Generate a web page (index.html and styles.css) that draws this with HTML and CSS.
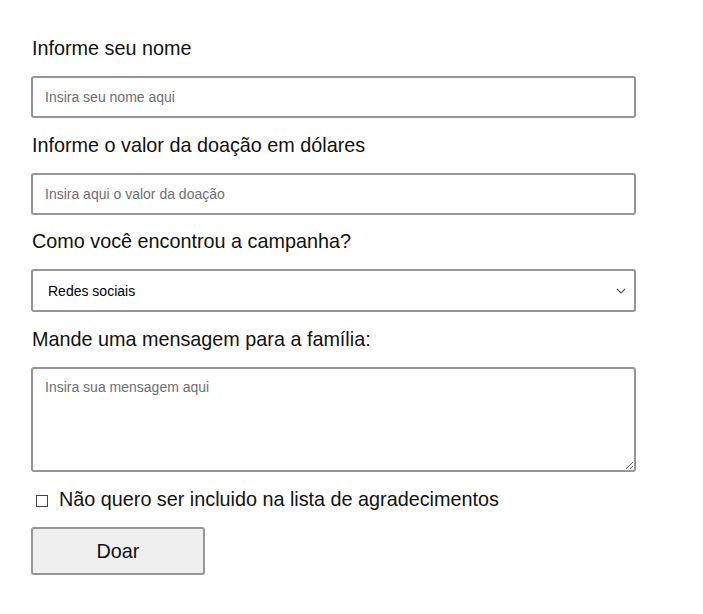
FILE: index.html
```html
<!DOCTYPE html>
<html lang="pt-BR">
<head>
<meta charset="utf-8">
<link rel="stylesheet" href="styles.css">
</head>
<body>
<form class="form">
  <label class="label" for="nome">Informe seu nome</label>
  <input class="field" id="nome" type="text" placeholder="Insira seu nome aqui">
  <label class="label" for="valor">Informe o valor da doação em dólares</label>
  <input class="field field-tight" id="valor" type="text" placeholder="Insira aqui o valor da doação">
  <label class="label" for="origem">Como você encontrou a campanha?</label>
  <select class="field select" id="origem">
    <option>Redes sociais</option>
  </select>
  <label class="label" for="msg">Mande uma mensagem para a família:</label>
  <textarea class="field area" id="msg" placeholder="Insira sua mensagem aqui"></textarea>
  <div class="check-row"><span class="box"></span><span>Não quero ser incluido na lista de agradecimentos</span></div>
  <button class="btn" type="button">Doar</button>
</form>
</body>
</html>
```
FILE: styles.css
```css
* { box-sizing: border-box; }
body {
  margin: 0;
  background: #fff;
  font-family: "Liberation Sans", Arial, sans-serif;
  color: #111;
}
.form {
  display: flex;
  flex-direction: column;
  align-items: flex-start;
  padding: 37px 0 0 31px;
  width: 636px;
}
.label {
  font-size: 19.8px;
  line-height: 23px;
  margin: 0 0 16px 1px;
}
.field {
  width: 605px;
  height: 42px;
  border: 2px solid #969696;
  border-radius: 3px;
  font-family: "Liberation Sans", Arial, sans-serif;
  font-size: 14px;
  padding: 0 12px;
  margin: 0 0 16px 0;
  color: #111;
  background: #fff;
  outline: none;
}
.field-tight { margin-bottom: 15px; }
.field::placeholder { color: #6f6f6f; }
.select {
  height: 43px;
  padding-left: 15px;
  color: #000;
  -webkit-appearance: none;
  appearance: none;
  background: #fff url("data:image/svg+xml,%3Csvg xmlns='http://www.w3.org/2000/svg' width='10' height='6' viewBox='0 0 10 6'%3E%3Cpath d='M1 1l4 4 4-4' fill='none' stroke='%23555' stroke-width='1.1'/%3E%3C/svg%3E") no-repeat right 8px center;
}
.area {
  height: 105px;
  padding: 10px 12px;
  resize: vertical;
}
.check-row {
  display: flex;
  align-items: center;
  font-size: 19.8px;
  line-height: 23px;
  margin: 0 0 16px 5px;
}
.box {
  width: 12px;
  height: 12px;
  border: 1px solid #444;
  margin-right: 11px;
  margin-top: 2px;
}
.btn {
  width: 174px;
  height: 48px;
  background: #efefef;
  border: 2px solid #979797;
  border-radius: 3px;
  font-family: "Liberation Sans", Arial, sans-serif;
  font-size: 19.8px;
  color: #111;
}
```
